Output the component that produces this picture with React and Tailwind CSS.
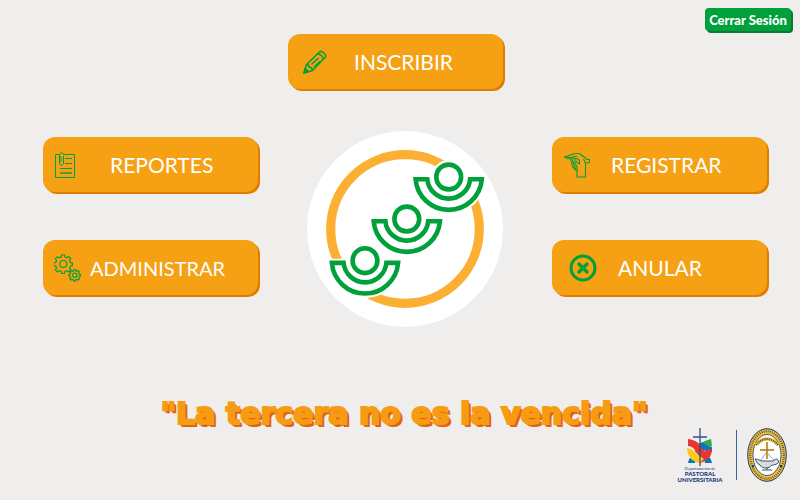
import React from "react";

function PencilIcon() {
  return (
    <svg aria-hidden="true" className="h-6 w-6 shrink-0" viewBox="0 0 24 24" fill="none" stroke="#00a03a" strokeWidth="1.6" strokeLinejoin="round">
      <path d="M1 23 3.500 14.500 16.500 2c2.200-2 7 2.300 6 5L9.500 20.500Z" />
      <path d="M3.500 14.500c1.700 0 2.700 1 2.700 2.700 1.800 0 3.300 1.200 3.300 3.200M14.500 4c3 .3 5.200 2.500 5.500 5.200M8.500 14.500 15.500 8M11 17l6.500-6" />
      <path d="m1 23 1.200-4.500 3.300 3Z" fill="#00a03a" />
    </svg>
  );
}

function ReportIcon() {
  return (
    <svg aria-hidden="true" className="h-[26px] w-5 shrink-0" viewBox="0 0 20 26" fill="none" stroke="#00a03a">
      <path d="M4 2.500H.5v23h19v-23H8" />
      <path d="M10 6.500h7M10 11.500h7M5 16.500h12" />
      <path d="M5 21h12" strokeWidth="2" opacity=".7" />
      <path d="M6 4v6M8.500 4v7c0 3-4 3-4 0V3c0-3 4-3 4 0" />
    </svg>
  );
}

function GearsIcon() {
  return (
    <svg aria-hidden="true" className="h-7 w-[27px] shrink-0" viewBox="0 0 27 28" fill="none" stroke="#00a03a" strokeWidth="1.200" strokeLinejoin="round">
      <g id="gear">
        <path d="M7.500 1h3l.5 2 2 .8 1.800-1.200 2 2-1.200 2 .8 2 2 .4v2.600l-2 .5-.8 2 1.200 1.800-2 2-2-1.200-2 .8-.5 2h-2.600l-.5-2-2-.8-1.800 1.200-2-2 1.200-2-.8-1.900-2-.5V9l2-.5.8-2-1.200-1.800 2-2 2 1.200 1.800-.9Z" />
        <circle cx="9.300" cy="10" r="3.500" />
      </g>
      <use href="#gear" transform="translate(15 15) scale(.62)" strokeWidth="1.900" />
    </svg>
  );
}

function HandIcon() {
  return (
    <svg aria-hidden="true" className="h-[26px] w-[26px] shrink-0" viewBox="0 0 26 26" fill="none" stroke="#00a03a" strokeWidth="1.100" strokeLinejoin="round">
      <path d="M.5 5 5 3.500 11 1.500h4l6.500 4.500 1 1.500h3v3l-4 .5V25h-8.500v-6L9 15.500 6.500 7 1 5.500Z" />
      <path d="M1 5 7 5.500 13 4M7 6l6 .5 2.500 2V12l-2-1-3-4M8 7l3.500 10M10 9l3 6v4M19.500 7l2 4" />
    </svg>
  );
}

function CancelIcon() {
  return (
    <svg aria-hidden="true" className="h-7 w-7 shrink-0" viewBox="0 0 28 28" fill="none" stroke="#00a03a">
      <circle cx="14" cy="14" r="12" strokeWidth="3" />
      <path d="m10 10 8 8m0-8-8 8" strokeWidth="3.500" strokeLinecap="round" />
    </svg>
  );
}

function MenuButton({ icon, label, className }) {
  return (
    <button
      type="button"
      className={`flex h-[55px] w-[215px] items-center rounded-xl bg-[#f6a113] text-left leading-6 text-white shadow-[2px_2px_0_#e27c00] ${className}`}
    >
      {icon}
      <span>{label}</span>
    </button>
  );
}

function Person({ x, y }) {
  return (
    <g transform={`translate(${x} ${y})`}>
      <path d="M-37.500-2h75V0a37.500 37.500 0 0 1-75 0Z" fill="#fff" />
      <circle r="17" fill="#fff" />
      <g fill="none" stroke="#00a03a" strokeWidth="4.600">
        <circle r="12.400" />
        <path d="M-33.100 2.200h11.700A21.500 21.500 0 0 0 21.400 2.200h11.700A33.200 33.200 0 0 1-33.100 2.200Z" />
      </g>
    </g>
  );
}

function Emblem() {
  return (
    <svg role="img" aria-label="Emblema" className="h-[196px] w-[196px]" viewBox="0 0 196 196">
      <circle cx="98" cy="98" r="98" fill="#fff" />
      <circle cx="98" cy="98" r="74.300" fill="none" stroke="#fbb034" strokeWidth="9.200" />
      <Person x={141.700} y={46} />
      <Person x={99.800} y={88} />
      <Person x={58} y={129.700} />
    </svg>
  );
}

function PastoralLogo() {
  return (
    <div className="flex w-11 flex-col items-center text-center font-['Lato',sans-serif] text-[#173b7a]">
      <svg aria-hidden="true" className="h-[38px] w-7" viewBox="0 0 28 38" fill="none">
        <path d="M2 35C3 29 7 26 13 24l3 4C11 30 9 32 9 35Z" fill="#0878be" />
        <path d="M26 35C25 29 21 26 15 24l-3 4c5 2 7 4 7 7Z" fill="#0878be" />
        <path d="M25 11C16 13 12 18 8 25l6 3C17 22 20 20 26 18Z" fill="#31a84a" />
        <path d="M12 16 17 14C20 18 23 19 26 19v5C19 24 15 21 12 16Z" fill="#0878be" />
        <path d="M26 21c0 8-5 12-12 14l-3-3c7-2 8-4 9-10Z" fill="#e73530" />
        <path d="M1 20c6 1 9 4 12 8l5 3-4 4C6 34 1 28 1 20Z" fill="#ffc91b" />
        <path d="M2 11C10 12 13 15 16 20c2 3 4 4 7 5l-4 6C9 28 11 19 2 18Z" fill="#e73530" />
        <path d="M3 19.500C9 21 9 27 16 30.500" stroke="#f4efe7" strokeWidth=".6" />
        <path d="M14 0v38M7 9h14" stroke="#31517e" strokeWidth="1.300" />
      </svg>
      <span className="whitespace-nowrap text-[4px] leading-[5px]">Departamento de</span>
      <strong className="flex flex-col whitespace-nowrap text-[6px] font-black leading-[6px]">
        <span>PASTORAL</span>
        <span>UNIVERSITARIA</span>
      </strong>
    </div>
  );
}

function Seal() {
  return (
    <svg role="img" aria-label="Escudo de la universidad" className="h-[54px] w-10" viewBox="0 0 40 54" fill="none">
      <ellipse cx="20" cy="27" rx="19.300" ry="26.300" fill="#f6be2c" stroke="#173b7a" strokeWidth="1" />
      <ellipse cx="20" cy="27" rx="16.800" ry="23.800" stroke="#254674" strokeWidth="2.200" strokeDasharray=".8 1.300" />
      <ellipse cx="20" cy="27" rx="14" ry="20.500" fill="#fff" stroke="#173b7a" strokeWidth=".8" />
      <path d="M9 17c6-8 16-8 22 0" stroke="#f6be2c" strokeWidth="3.500" />
      <path d="M9 17c6-8 16-8 22 0" stroke="#254674" strokeWidth="1.800" strokeDasharray=".9 1" />
      <path d="M20 14v17M13 22h14" stroke="#edb72e" strokeWidth="2.200" />
      <path d="M20 14v17M13 22h14M19 25l-6 8M21 26l6 6" stroke="#31517e" strokeWidth=".5" />
      <path d="M8 31c4 0 4 2 8 2h9c3 0 4-4 6-1s-2 5-6 5c-3 4-10 4-12 0-3-1-4-5-5-6Zm7 11h10M20 39v3" fill="#dcdcd2" stroke="#31517e" strokeWidth="1" />
      <path d="M5 38h2M33 38h2" stroke="#173b7a" strokeWidth="2" />
    </svg>
  );
}

export default function App() {
  return (
    <div className="flex min-h-screen flex-col bg-[#efeeec] font-['Lato',sans-serif]">
      <header className="grid grid-cols-[1fr_auto_1fr] items-start pr-[9px] pt-2">
        <div className="col-start-2 pt-[26px]">
          <MenuButton icon={<PencilIcon />} label="INSCRIBIR" className="gap-[27px] pl-[15px] text-[21px]" />
        </div>
        <button
          type="button"
          className="h-[23px] w-[86px] justify-self-end whitespace-nowrap rounded bg-[#00a03a] text-[13px] font-black leading-4 text-white shadow-[2px_2px_0_#087a35]"
        >
          Cerrar Sesión
        </button>
      </header>

      <main className="flex flex-col pt-[42px]">
        <nav aria-label="Menú principal" className="grid grid-cols-[auto_1fr_auto] items-start pl-[43px] pr-[33px]">
          <div className="flex flex-col gap-12 pt-[6px]">
            <MenuButton icon={<ReportIcon />} label="REPORTES" className="gap-[35px] pl-3 text-[21px]" />
            <MenuButton icon={<GearsIcon />} label="ADMINISTRAR" className="gap-[9px] pl-[11px] text-[20px]" />
          </div>
          <div className="flex justify-center">
            <Emblem />
          </div>
          <div className="flex flex-col gap-12 pt-[6px]">
            <MenuButton icon={<HandIcon />} label="REGISTRAR" className="gap-[21px] pl-3 text-[21px]" />
            <MenuButton icon={<CancelIcon />} label="ANULAR" className="gap-[21px] pl-[17px] text-[21px]" />
          </div>
        </nav>
        <h1 className="whitespace-nowrap pl-2 pt-[73px] text-center font-['DejaVu_Sans',sans-serif] text-[30px] font-bold leading-7 text-[#f79b13] [-webkit-text-stroke:2px_#f79b13] [text-shadow:1px_1px_0_#df6514,2px_2px_0_#df6514,3px_3px_0_#df6514]">
          "La tercera no es la vencida"
        </h1>
      </main>

      <footer className="flex items-start justify-end pr-[13px]">
        <PastoralLogo />
        <div className="ml-[14px] mr-[10px] mt-[2px] h-[50px] w-px bg-[#3a649b]" />
        <Seal />
      </footer>
    </div>
  );
}
